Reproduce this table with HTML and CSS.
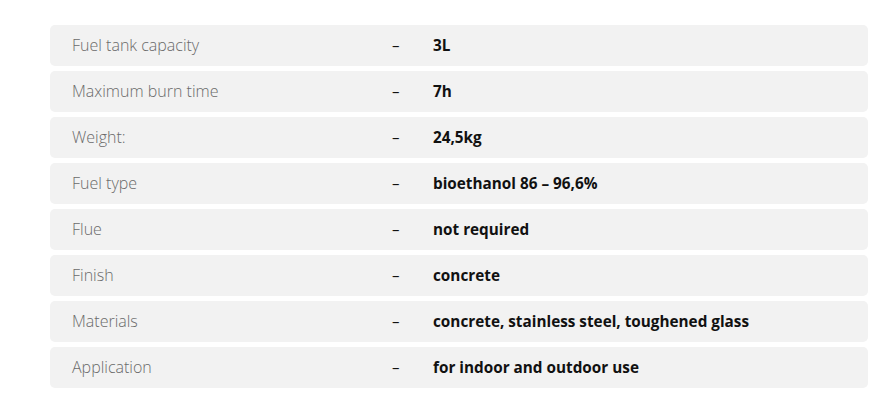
FILE: index.html
```html
<!DOCTYPE html>
<html>
<head>
<meta charset="utf-8">
<link rel="stylesheet" href="styles.css">
</head>
<body>
<div class="specs">
  <div class="row"><span class="label">Fuel tank capacity</span><span class="dash">–</span><span class="value">3L</span></div>
  <div class="row"><span class="label">Maximum burn time</span><span class="dash">–</span><span class="value">7h</span></div>
  <div class="row"><span class="label">Weight:</span><span class="dash">–</span><span class="value">24,5kg</span></div>
  <div class="row"><span class="label">Fuel type</span><span class="dash">–</span><span class="value">bioethanol 86 – 96,6%</span></div>
  <div class="row"><span class="label">Flue</span><span class="dash">–</span><span class="value">not required</span></div>
  <div class="row"><span class="label">Finish</span><span class="dash">–</span><span class="value">concrete</span></div>
  <div class="row"><span class="label">Materials</span><span class="dash">–</span><span class="value">concrete, stainless steel, toughened glass</span></div>
  <div class="row"><span class="label">Application</span><span class="dash">–</span><span class="value">for indoor and outdoor use</span></div>
</div>
</body>
</html>
```
FILE: styles.css
```css
html, body {
  margin: 0;
  padding: 0;
  background: #fff;
}
body {
  padding: 25px 26px 0 50px;
  font-family: "Open Sans", "Lato", sans-serif;
  font-size: 15px;
}
.specs {
  display: flex;
  flex-direction: column;
  gap: 5px;
}
.row {
  display: grid;
  grid-template-columns: 320px 41px 1fr;
  align-items: center;
  height: 41px;
  padding-left: 22px;
  padding-bottom: 2px;
  box-sizing: border-box;
  background: #f2f2f2;
  border-radius: 5px;
}
.label {
  font-size: 16px;
  font-weight: 300;
  color: #6a6a6a;
}
.dash {
  color: #111;
}
.value {
  font-size: 15.3px;
  font-weight: 700;
  color: #111;
}
```
